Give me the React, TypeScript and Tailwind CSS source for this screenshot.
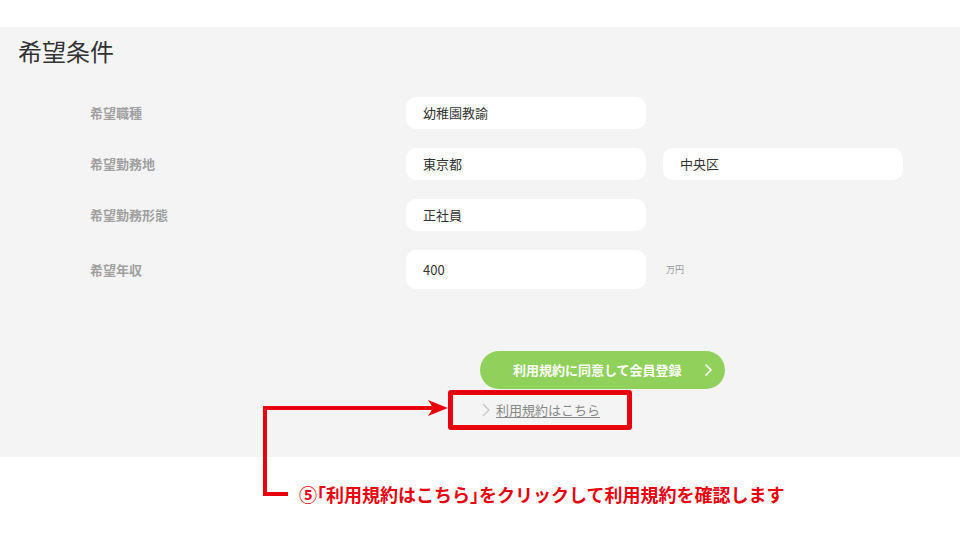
import React from 'react';

interface Fila {
  etiqueta: string;
  valores: string[];
  unidad?: string;
  alto?: string;
}

const filas: Fila[] = [
  { etiqueta: '希望職種', valores: ['幼稚園教諭'] },
  { etiqueta: '希望勤務地', valores: ['東京都', '中央区'] },
  { etiqueta: '希望勤務形態', valores: ['正社員'] },
  { etiqueta: '希望年収', valores: ['400'], unidad: '万円', alto: 'h-[39px]' },
];

const fuente = { fontFamily: '"Noto Sans CJK JP", "Noto Sans", sans-serif' };

const App: React.FC = () => {
  return (
    <div className="relative w-[960px] h-[540px] overflow-hidden bg-white" style={fuente}>
      <div className="h-[27px]" />

      {/* Bloque gris del formulario */}
      <section className="h-[430px] bg-[#f4f4f4] pt-[8px]">
        <h2 className="pl-[18px] text-[24px] leading-[32px] text-[#333]">希望条件</h2>

        <div className="mt-[30px] flex flex-col gap-[19px]">
          {filas.map((fila) => (
            <div key={fila.etiqueta} className="flex items-center">
              <div className="w-[406px] pl-[90px] text-[13px] font-bold text-[#a0a0a0]">
                {fila.etiqueta}
              </div>
              <div className="flex items-center gap-[17px]">
                {fila.valores.map((v) => (
                  <div
                    key={v}
                    className={`flex w-[240px] items-center rounded-[10px] bg-white pl-[17px] text-[13px] text-[#333] ${
                      fila.alto ?? 'h-[32px]'
                    }`}
                  >
                    {v}
                  </div>
                ))}
                {fila.unidad && (
                  <span className="ml-[3px] text-[9px] text-[#999]">{fila.unidad}</span>
                )}
              </div>
            </div>
          ))}
        </div>

        {/* Botón de registro */}
        <div className="mt-[62px] flex">
          <button className="ml-[480px] flex h-[38px] w-[245px] items-center whitespace-nowrap rounded-full bg-[#8fd15a] pl-[33px] text-[13px] font-bold text-white">
            <span>利用規約に同意して会員登録</span>
            <svg className="ml-[22px]" width="9" height="14" viewBox="0 0 9 14" fill="none">
              <path d="M1.5 1.5 L7 7 L1.5 12.5" stroke="white" strokeWidth="1.6" />
            </svg>
          </button>
        </div>

        <div className="mt-[11px] flex items-center pl-[482px] text-[13px] text-[#888]">
          <svg width="8" height="14" viewBox="0 0 8 14" fill="none">
            <path d="M1 1 L7 7 L1 13" stroke="#c4c4c4" strokeWidth="1.2" />
          </svg>
          <span className="ml-[6px] underline underline-offset-2">利用規約はこちら</span>
        </div>
      </section>

      {/* Anotación */}
      <div className="absolute left-[448px] top-[390px] h-[40px] w-[184px] rounded-[3px] border-[5px] border-[#e8000f]" />
      <svg className="absolute left-[260px] top-[398px]" width="190" height="100" viewBox="0 0 190 100" fill="none">
        <path d="M5 96 L5 10 L176 10" stroke="#e8000f" strokeWidth="4" />
        <path d="M3 96 L28 96" stroke="#e8000f" strokeWidth="4" />
        <path d="M168 2 L188 10 L168 18 L173 10 Z" fill="#e8000f" />
      </svg>
      <p className="absolute left-[299px] top-[482px] whitespace-nowrap text-[18px] font-bold leading-[24px] text-[#e8000f]">
        ⑤<span className="[font-feature-settings:'halt']">「</span>利用規約はこちら
        <span className="[font-feature-settings:'halt']">」</span>をクリックして利用規約を確認します
      </p>
    </div>
  );
};

export default App;
